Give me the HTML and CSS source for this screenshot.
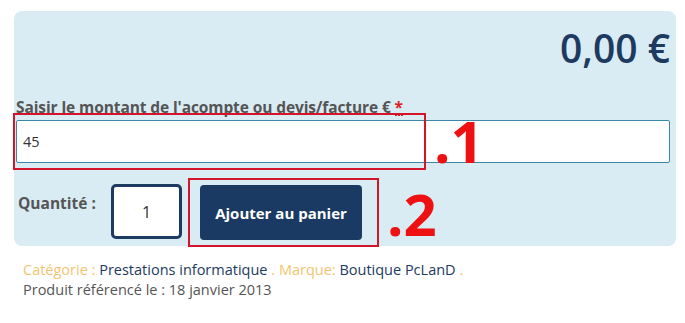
FILE: index.html
```html
<!DOCTYPE html>
<html lang="fr">
<head>
    <meta charset="UTF-8">
    <title>Acompte - Boutique PcLanD</title>
    <link rel="stylesheet" href="styles.css">
</head>
<body>
    <div class="page">
        <div class="buy-box">
            <div class="price">0,00 €</div>

            <label class="field-label" for="amount">Saisir le montant de l'acompte ou devis/facture € <span class="required">*</span></label>
            <div class="amount-wrap">
                <input type="text" id="amount" class="amount-input" value="45">
                <div class="mark mark-1"></div>
                <span class="step step-1">.1</span>
            </div>

            <div class="cart-row">
                <span class="qty-label">Quantité :</span>
                <input type="text" class="qty-input" value="1">
                <div class="btn-wrap">
                    <button class="add-btn">Ajouter au panier</button>
                    <div class="mark mark-2"></div>
                    <span class="step step-2">.2</span>
                </div>
            </div>
        </div>

        <div class="meta">
            <div><span class="hl">Catégorie :</span> Prestations informatique <span class="hl">.</span> <span class="hl">Marque:</span> Boutique PcLanD <span class="hl">.</span></div>
            <div class="date">Produit référencé le : 18 janvier 2013</div>
        </div>
    </div>
</body>
</html>
```

FILE: styles.css
```css
body {
    margin: 0;
    font-family: "Open Sans", "Noto Sans", sans-serif;
    font-size: 14px;
    color: #333;
    background: #fff;
}

.page {
    padding: 11px 9px 0 14px;
}

.buy-box {
    background-color: #d9ecf4;
    border-radius: 8px;
    padding: 12px 6px 6px 2px;
}

.price {
    text-align: right;
    font-size: 39px;
    font-weight: 600;
    line-height: 50px;
    color: #1d3a60;
    margin-bottom: 24px;
}

.field-label {
    display: block;
    font-size: 15.5px;
    font-weight: 700;
    color: #555;
    line-height: 20px;
    margin-bottom: 3px;
    letter-spacing: -0.1px;
    text-decoration: none;
}

.required {
    display: inline-block;
    color: #e02020;
    line-height: 14px;
    border-bottom: 2px dotted #e02020;
}

.amount-wrap {
    position: relative;
}

.amount-input {
    box-sizing: border-box;
    width: 100%;
    height: 43px;
    margin: 0;
    padding: 0 6px;
    border: 1px solid #3a88a8;
    border-radius: 2px;
    font-family: inherit;
    font-size: 14.5px;
    color: #333;
    background: #fff;
    outline: none;
}

.mark {
    position: absolute;
    border: 2px solid #d41428;
    box-sizing: border-box;
}

.mark-1 {
    left: -3px;
    top: -7px;
    width: 413px;
    height: 57px;
}

.step {
    position: absolute;
    color: #ee1111;
    font-family: "Open Sans", sans-serif;
    font-weight: 700;
    font-size: 58px;
    line-height: 1;
}

.step-1 {
    left: 418px;
    top: -8px;
}

.cart-row {
    display: flex;
    align-items: flex-start;
    margin-top: 21px;
}

.qty-label {
    font-size: 15.5px;
    font-weight: 700;
    color: #555;
    margin: 8px 0 0 2px;
    width: 93px;
}

.qty-input {
    box-sizing: border-box;
    width: 71px;
    height: 55px;
    margin: 0;
    border: 3px solid #1d3a60;
    border-radius: 5px;
    text-align: center;
    font-family: inherit;
    font-size: 16px;
    color: #333;
    background: #fff;
    outline: none;
}

.btn-wrap {
    position: relative;
    margin-left: 18px;
    margin-top: 1px;
}

.add-btn {
    display: block;
    width: 162px;
    height: 55px;
    border: none;
    border-radius: 4px;
    background-color: #1b3a63;
    color: #fff;
    font-family: inherit;
    font-weight: 700;
    font-size: 15px;
    cursor: pointer;
}

.mark-2 {
    left: -12px;
    top: -7px;
    width: 191px;
    height: 69px;
}

.step-2 {
    left: 187px;
    top: 0;
}

.meta {
    padding: 14px 0 0 9px;
    font-size: 14.5px;
    line-height: 20px;
    color: #1d3a60;
}

.meta .hl {
    color: #f2c46f;
}

.meta .date {
    color: #555;
}
```
